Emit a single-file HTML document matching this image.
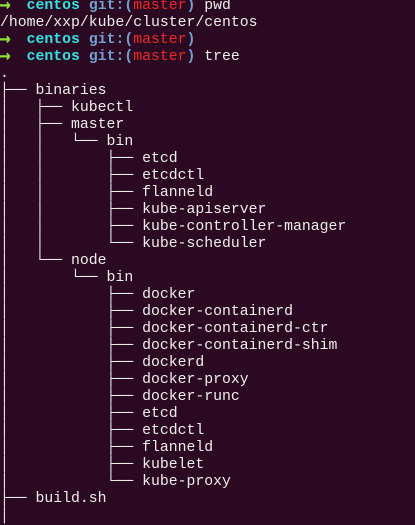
<!DOCTYPE html><html><head><style>
html,body{margin:0;padding:0;background:#2c0922;width:415px;height:508px;overflow:hidden}
pre{margin:0;position:absolute;top:-2.5px;left:0;font-family:"Liberation Mono","DejaVu Sans Mono",monospace;font-size:14.8px;line-height:17.02px;color:#eeeeec}
.g{color:#8ae234;font-weight:bold;font-family:"DejaVu Sans Mono",monospace;line-height:1px;display:inline-block;width:8.88px;transform:scale(1.3,1.4);transform-origin:30% 50%}.c{color:#34e2e2;font-weight:bold}.b{color:#729fcf;font-weight:bold}.r{color:#ef2929}
</style></head><body><pre><span class="g">→</span>  <span class="c">centos</span> <span class="b">git:(</span><span class="r">master</span><span class="b">)</span> pwd
/home/xxp/kube/cluster/centos
<span class="g">→</span>  <span class="c">centos</span> <span class="b">git:(</span><span class="r">master</span><span class="b">)</span>
<span class="g">→</span>  <span class="c">centos</span> <span class="b">git:(</span><span class="r">master</span><span class="b">)</span> tree
.
├── binaries
│   ├── kubectl
│   ├── master
│   │   └── bin
│   │       ├── etcd
│   │       ├── etcdctl
│   │       ├── flanneld
│   │       ├── kube-apiserver
│   │       ├── kube-controller-manager
│   │       └── kube-scheduler
│   └── node
│       └── bin
│           ├── docker
│           ├── docker-containerd
│           ├── docker-containerd-ctr
│           ├── docker-containerd-shim
│           ├── dockerd
│           ├── docker-proxy
│           ├── docker-runc
│           ├── etcd
│           ├── etcdctl
│           ├── flanneld
│           ├── kubelet
│           └── kube-proxy
├── build.sh
│</pre></body></html>
